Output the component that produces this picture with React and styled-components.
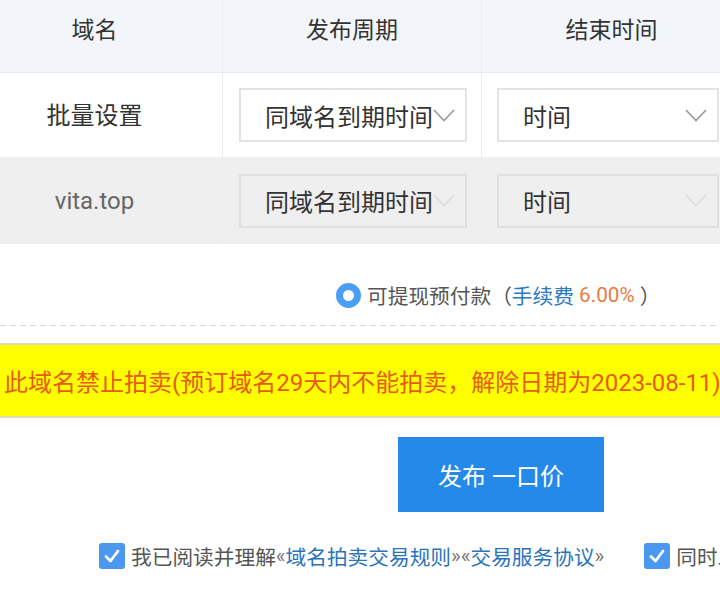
import React from "react";
import styled, { createGlobalStyle } from "styled-components";

const GlobalStyle = createGlobalStyle`
  html, body { margin: 0; padding: 0; background: #fff; overflow: hidden; }
  body { font-family: Roboto, "Noto Sans CJK SC", sans-serif; color: #333; }
  * { box-sizing: border-box; }
`;

const Page = styled.div`
  width: 720px;
  height: 605px;
  overflow: hidden;
  background: #fff;
`;

const Table = styled.div`
  display: flex;
  flex-direction: column;
  width: 760px;
`;

const Row = styled.div`
  display: flex;
  height: ${(p) => p.$h}px;
  background: ${(p) => p.$bg};
  border-bottom: ${(p) => (p.$head ? "1px solid #e7eaef" : "none")};
`;

const Cell = styled.div`
  display: flex;
  align-items: center;
  justify-content: ${(p) => (p.$left ? "flex-start" : "center")};
  width: ${(p) => p.$w}px;
  flex: none;
  padding: ${(p) => p.$pad || "0"};
  border-right: 1px solid ${(p) => (p.$head ? "#e8ecf2" : "#ececec")};
  font-size: 24px;
  color: ${(p) => p.$color || "#333"};
`;

const HeadText = styled.span`
  margin-top: -16px;
  font-size: 23px;
  color: #333;
`;

const SelectBox = styled.div`
  display: flex;
  align-items: center;
  justify-content: space-between;
  width: ${(p) => p.$w}px;
  height: 54px;
  padding: 0 10px 0 24px;
  border: 2px solid ${(p) => (p.$disabled ? "#e0e0e0" : "#e3e3e3")};
  background: ${(p) => (p.$disabled ? "#efefef" : "#fff")};
  font-size: 24px;
  color: #333;
  white-space: nowrap;
`;

const Chevron = ({ color }) => (
  <svg width="22" height="13" viewBox="0 0 22 13" fill="none">
    <polyline points="1,1 11,11.5 21,1" stroke={color} strokeWidth="1.6" />
  </svg>
);

const Select = ({ w, disabled, children }) => (
  <SelectBox $w={w} $disabled={disabled}>
    <span>{children}</span>
    <Chevron color={disabled ? "#dcdcdc" : "#9a9a9a"} />
  </SelectBox>
);

const RadioRow = styled.div`
  display: flex;
  align-items: center;
  height: 40px;
  margin-top: 31px;
  padding-left: 336px;
  font-size: 20.7px;
  color: #555;
  white-space: nowrap;
`;

const RadioDot = styled.span`
  width: 25px;
  height: 25px;
  border-radius: 50%;
  border: 7px solid #4a9ef5;
  background: #fff;
  margin-right: 6px;
  flex: none;
`;

const Blue = styled.span`
  color: #2b78c4;
`;

const Orange = styled.span`
  color: #e97a43;
`;

const Dashed = styled.div`
  height: 1px;
  margin-top: 10px;
  background: repeating-linear-gradient(
    to right,
    #d8d8d8 0 6px,
    transparent 6px 10px
  );
`;

const Banner = styled.div`
  display: flex;
  align-items: center;
  height: 75px;
  margin-top: 17px;
  padding-left: 4px;
  background: #ffff00;
  border-top: 2px solid #dcdcb0;
  border-bottom: 2px solid #dcdcb0;
  color: #e85b17;
  font-size: 24px;
  white-space: nowrap;
  overflow: hidden;
`;

const ButtonRow = styled.div`
  display: flex;
  margin-top: 19px;
  padding-left: 398px;
`;

const PublishButton = styled.button`
  width: 206px;
  height: 75px;
  border: none;
  border-radius: 0;
  background: #2589ea;
  color: #fff;
  font-family: inherit;
  font-size: 24px;
  padding: 0;
`;

const AgreeRow = styled.div`
  display: flex;
  align-items: center;
  margin-top: 31px;
  padding-left: 99px;
  height: 26px;
  font-size: 20.7px;
  color: #555;
  white-space: nowrap;
`;

const CheckBox = styled.span`
  display: flex;
  align-items: center;
  justify-content: center;
  width: 26px;
  height: 26px;
  border-radius: 3px;
  background: #4a98f0;
  margin-right: 6px;
  flex: none;
`;

const Check = () => (
  <CheckBox>
    <svg width="20" height="20" viewBox="0 0 20 20" fill="none">
      <polyline
        points="4,10.5 8.5,15 16,5"
        stroke="#fff"
        strokeWidth="2.8"
        strokeLinecap="round"
        strokeLinejoin="round"
      />
    </svg>
  </CheckBox>
);

const Gray = styled.span`
  color: #777;
`;

const Link = styled.span`
  color: #2b73bc;
`;

const Spacer = styled.span`
  display: inline-block;
  width: ${(p) => p.$w}px;
  flex: none;
`;

const Clip = styled.span`
  display: inline-block;
  overflow: hidden;
  width: 60px;
`;

export default function App() {
  return (
    <Page>
      <GlobalStyle />
      <Table>
        <Row $h={73} $bg="#f2f6fb" $head>
          <Cell $w={223} $head $pad="0 33px 0 0">
            <HeadText>域名</HeadText>
          </Cell>
          <Cell $w={259} $head>
            <HeadText>发布周期</HeadText>
          </Cell>
          <Cell $w={278} $head $pad="0 18px 0 0">
            <HeadText>结束时间</HeadText>
          </Cell>
        </Row>
        <Row $h={84} $bg="#fff">
          <Cell $w={223} $pad="0 33px 3px 0">批量设置</Cell>
          <Cell $w={259} $left $pad="0 0 0 16px">
            <Select w={228}>同域名到期时间</Select>
          </Cell>
          <Cell $w={278} $left $pad="0 0 0 15px">
            <Select w={222}>时间</Select>
          </Cell>
        </Row>
        <Row $h={87} $bg="#efefef">
          <Cell $w={223} $pad="0 33px 0 0" $color="#666">
            vita.top
          </Cell>
          <Cell $w={259} $left $pad="0 0 0 16px">
            <Select w={228} disabled>
              同域名到期时间
            </Select>
          </Cell>
          <Cell $w={278} $left $pad="0 0 0 15px">
            <Select w={222} disabled>
              时间
            </Select>
          </Cell>
        </Row>
      </Table>

      <RadioRow>
        <RadioDot />
        可提现预付款（<Blue>手续费</Blue>&nbsp;<Orange>6.00%</Orange>&nbsp;）
      </RadioRow>

      <Dashed />

      <Banner>此域名禁止拍卖(预订域名29天内不能拍卖，解除日期为2023-08-11)</Banner>

      <ButtonRow>
        <PublishButton>发布 一口价</PublishButton>
      </ButtonRow>

      <AgreeRow>
        <Check />
        我已阅读并理解<Gray>«</Gray>
        <Link>域名拍卖交易规则</Link>
        <Gray>»«</Gray>
        <Link>交易服务协议</Link>
        <Gray>»</Gray>
        <Spacer $w={40} />
        <Check />
        <Clip>同时发</Clip>
      </AgreeRow>
    </Page>
  );
}
